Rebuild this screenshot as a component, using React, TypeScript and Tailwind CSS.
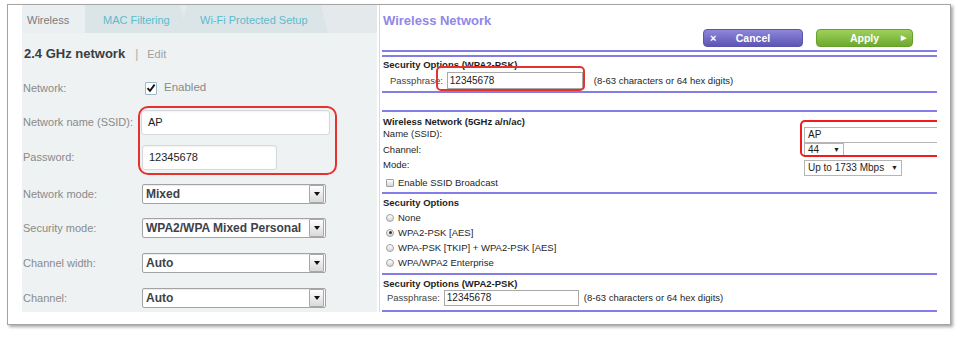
import React from 'react';

// 左侧：2.4 GHz 设置面板的一行
function Row({ label, children, className = '' }: { label: string; children: React.ReactNode; className?: string }) {
  return (
    <div className={`flex items-center ${className}`}>
      <div className="w-[120px] pl-[1px] text-[11px] text-[#8a8a8a]">{label}</div>
      {children}
    </div>
  );
}

function LeftSelect({ value }: { value: string }) {
  return (
    <div className="w-[184px] h-[20px] bg-white border border-[#a3a3a3] rounded-[2px] flex items-center justify-between shadow-[inset_0_1px_1px_rgba(0,0,0,0.08)]">
      <span className="pl-[3px] text-[12px] font-bold text-[#3d4248]">{value}</span>
      <div className="w-[15px] h-[18px] mr-[1px] border border-[#a8a8a8] rounded-[1px] bg-linear-to-b from-white to-[#d9d9d9] flex items-center justify-center">
        <svg width="6" height="4" viewBox="0 0 6 4"><path d="M0 0h6L3 4z" fill="#111" /></svg>
      </div>
    </div>
  );
}

function LeftInput({ value, w }: { value: string; w: string }) {
  return (
    <div className={`${w} h-[25px] bg-white border border-[#d3d9dc] rounded-[3px] flex items-center pl-[6px] text-[11px] text-[#222] shadow-[inset_0_1px_2px_rgba(0,0,0,0.06)]`}>
      {value}
    </div>
  );
}

function PurpleLine({ className = '' }: { className?: string }) {
  return <div className={`h-[2px] bg-[#857de6] ${className}`} />;
}

function Radio({ checked, label }: { checked?: boolean; label: string }) {
  return (
    <div className="h-[15px] flex items-center pl-[4px]">
      <div className="w-[8px] h-[8px] rounded-full border border-[#a0a0a0] bg-linear-to-b from-white to-[#d6d6d6] flex items-center justify-center">
        {checked && <div className="w-[3px] h-[3px] rounded-full bg-[#333]" />}
      </div>
      <span className="ml-[4px]">{label}</span>
    </div>
  );
}

function Passphrase({ labelPad, inputW, noteGap }: { labelPad: string; inputW: string; noteGap: string }) {
  return (
    <div className={`flex items-center h-full ${labelPad}`}>
      <span className="text-[#444]">Passphrase:</span>
      <div className={`${inputW} h-full ml-[4px] bg-white border border-[#a9a9a9] flex items-center pl-[2px] text-[10px] text-[#222]`}>
        12345678
      </div>
      <span className={noteGap}>(8-63 characters or 64 hex digits)</span>
    </div>
  );
}

export default function App() {
  return (
    <div className="w-[960px] h-[337px] bg-white pt-[4px] pl-[7px] font-['Liberation_Sans',Arial,sans-serif] overflow-hidden">
      <div className="w-[944px] h-[321px] border border-[#a5a5a5] shadow-[2px_2px_3px_rgba(0,0,0,0.35)] flex pl-[14px] bg-white">
        {/* 左侧面板 */}
        <div className="relative w-[355px] h-[307px] shrink-0 bg-[#eef2f3] flex flex-col">
          {/* 标签栏 */}
          <div className="h-[28px] bg-[#e4eaec] flex items-end text-[11px]">
            <div className="w-[70px] h-full bg-[#eaeff1] [clip-path:polygon(0_0,63px_0,70px_100%,0_100%)] flex items-center pl-[5px] pt-[2px] text-[#7b7b7b]">
              Wireless
            </div>
            <div className="-ml-[7px] w-[102px] h-full bg-[#dbe4e7] [clip-path:polygon(0_0,95px_0,102px_100%,0_100%)] flex items-center pl-[18px] pt-[2px] text-[#5cbccb]">
              MAC Filtering
            </div>
            <div className="-ml-[7px] w-[148px] h-full bg-[#dbe4e7] [clip-path:polygon(7px_0,141px_0,148px_100%,0_100%)] flex items-center pl-[20px] pt-[2px] text-[#5cbccb]">
              Wi-Fi Protected Setup
            </div>
          </div>

          <div className="mt-[11px] h-[20px] flex items-center pl-[2px]">
            <span className="text-[13px] font-bold text-[#3a3d42]">2.4 GHz network</span>
            <span className="ml-[10px] text-[12px] text-[#aaa]">|</span>
            <span className="ml-[9px] text-[11px] text-[#a0a0a0]">Edit</span>
          </div>

          <Row label="Network:" className="mt-[12px] h-[24px]">
            <div className="ml-[3px] w-[12px] h-[13px] bg-white border border-[#9fb8c8] rounded-[1px] flex items-center justify-center">
              <svg width="10" height="10" viewBox="0 0 10 10"><path d="M1.5 5.2 4 7.8 8.6 1.6" fill="none" stroke="#111" strokeWidth="1.8" /></svg>
            </div>
            <span className="ml-[7px] text-[11.5px] text-[#8a8a8a]">Enabled</span>
          </Row>

          <Row label="Network name (SSID):" className="mt-[10px] h-[25px]">
            <div className="-ml-[1px]"><LeftInput value="AP" w="w-[189px]" /></div>
          </Row>

          <Row label="Password:" className="mt-[10px] h-[25px]">
            <LeftInput value="12345678" w="w-[135px]" />
          </Row>

          <Row label="Network mode:" className="mt-[14px] h-[20px]"><LeftSelect value="Mixed" /></Row>
          <Row label="Security mode:" className="mt-[14px] h-[20px]"><LeftSelect value="WPA2/WPA Mixed Personal" /></Row>
          <Row label="Channel width:" className="mt-[15px] h-[20px]"><LeftSelect value="Auto" /></Row>
          <Row label="Channel:" className="mt-[15px] h-[20px]"><LeftSelect value="Auto" /></Row>

          {/* 标注框 */}
          <div className="absolute left-[116px] top-[101px] w-[199px] h-[69px] border-2 border-[#e5322d] rounded-[10px]" />
        </div>

        <div className="ml-[2px] w-px h-[307px] shrink-0 bg-[#d6dadb]" />

        {/* 右侧面板 */}
        <div className="relative ml-[2px] w-[555px] h-[310px] shrink-0 overflow-hidden flex flex-col text-[9.5px] leading-[12px] text-[#1e1e1e]">
          <div className="mt-[9px] h-[13px] pl-[1px] text-[13px] leading-[13px] font-bold text-[#8f88e8]">Wireless Network</div>

          <div className="mt-[2px] h-[18px] flex justify-end pr-[24px] gap-[13px] text-[10.5px] font-bold text-white">
            <div className="w-[100px] h-full rounded-[4px] border border-[#5b53ad] bg-linear-to-b from-[#8e87da] to-[#5d55b5] flex items-center px-[6px]">
              <span className="w-[8px] text-[11px]">×</span>
              <span className="flex-1 text-center">Cancel</span>
              <span className="w-[8px]" />
            </div>
            <div className="w-[97px] h-full rounded-[4px] border border-[#64a02a] bg-linear-to-b from-[#9ed15a] to-[#6ea92e] flex items-center px-[6px]">
              <span className="w-[8px]" />
              <span className="flex-1 text-center">Apply</span>
              <span className="w-[8px] text-[7px] text-right">▶</span>
            </div>
          </div>

          <PurpleLine className="mt-[3px]" />
          <PurpleLine className="mt-[3px]" />

          <div className="mt-[2px] pl-[1px] font-bold">Security Options (WPA2-PSK)</div>
          <div className="mt-[1px] h-[17px]">
            <Passphrase labelPad="pl-[8px]" inputW="w-[136px]" noteGap="ml-[11px]" />
          </div>
          <PurpleLine className="mt-[2px]" />

          <PurpleLine className="mt-[17px]" />

          <div className="flex">
            <div className="w-[422px] shrink-0 pl-[1px] flex flex-col">
              <div className="mt-[4px] font-bold">Wireless Network (5GHz a/n/ac)</div>
              <div>Name (SSID):</div>
              <div className="mt-[4px]">Channel:</div>
              <div className="mt-[3px]">Mode:</div>
              <div className="mt-[6px] h-[12px] flex items-center pl-[3px]">
                <div className="w-[8px] h-[8px] rounded-[1px] border border-[#a0a0a0] bg-linear-to-b from-white to-[#d6d6d6]" />
                <span className="ml-[4px]">Enable SSID Broadcast</span>
              </div>
            </div>
            <div className="flex flex-col items-start shrink-0">
              <div className="mt-[15px] w-[200px] h-[16px] bg-white border border-[#b5b5b5] flex items-center pl-[3px] text-[10px]">AP</div>
              <div className="w-[40px] h-[14px] bg-white border border-[#b5b5b5] flex items-center justify-between px-[3px] text-[10px]">
                <span>44</span>
                <span className="text-[7px]">▼</span>
              </div>
              <div className="mt-[3px] w-[98px] h-[16px] bg-white border border-[#b5b5b5] flex items-center justify-between px-[3px] text-[10px]">
                <span>Up to 1733 Mbps</span>
                <span className="text-[7px]">▼</span>
              </div>
            </div>
          </div>

          <PurpleLine className="mt-[3px]" />

          <div className="mt-[3px] pl-[1px] font-bold">Security Options</div>
          <div className="mt-[1px] flex flex-col">
            <Radio label="None" />
            <Radio checked label="WPA2-PSK [AES]" />
            <Radio label="WPA-PSK [TKIP] + WPA2-PSK [AES]" />
            <Radio label="WPA/WPA2 Enterprise" />
          </div>

          <PurpleLine className="mt-[3px]" />

          <div className="mt-[3px] pl-[1px] font-bold">Security Options (WPA2-PSK)</div>
          <div className="h-[16px]">
            <Passphrase labelPad="pl-[5px]" inputW="w-[135px]" noteGap="ml-[5px]" />
          </div>
          <PurpleLine className="mt-[4px]" />

          {/* 标注框 */}
          <div className="absolute left-[54px] top-[61px] w-[149px] h-[25px] border-2 border-[#e5322d] rounded-[5px]" />
          <div className="absolute left-[418px] top-[115px] w-[150px] h-[37px] border-2 border-[#f01c1c] rounded-l-[5px]" />
        </div>
      </div>
    </div>
  );
}
